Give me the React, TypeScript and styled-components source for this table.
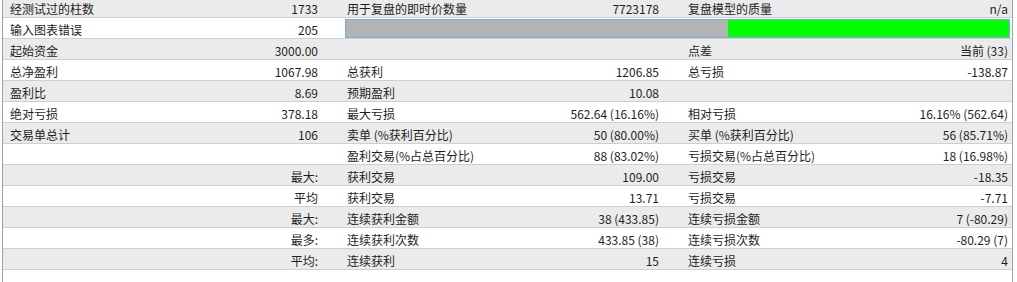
import styled, { createGlobalStyle } from 'styled-components';

const Global = createGlobalStyle`
  html, body { margin: 0; padding: 0; background: #fff; }
  body { font-family: "Noto Sans CJK SC", "Noto Sans", sans-serif; font-size: 12px; color: #1e1e1e; overflow: hidden; }
`;

const Table = styled.div`
  margin: -3px 0 0 2px;
  width: 1009px;
  border-left: 1px solid #a0a0a0;
  border-right: 1px solid #a0a0a0;
  padding-bottom: 12px;
`;

const Row = styled.div<{ $odd: boolean }>`
  display: grid;
  grid-template-columns: 197px 122px 178px 163px 187px 1fr;
  height: 20px;
  border-bottom: 1px solid #cfcfcf;
  background: ${(p) => (p.$odd ? '#ebebeb' : '#ffffff')};
`;

const Cell = styled.div<{ $right?: boolean; $first?: boolean }>`
  display: flex;
  align-items: center;
  padding-top: 2px;
  white-space: nowrap;
  justify-content: ${(p) => (p.$right ? 'flex-end' : 'flex-start')};
  padding-left: ${(p) => (p.$right ? '0' : p.$first ? '7px' : '25px')};
  padding-right: ${(p) => (p.$right ? '4px' : '0')};
`;

const BarCell = styled.div`
  grid-column: 3 / 7;
  display: flex;
  align-items: stretch;
  padding: 1px 2px 0 23px;
`;

const Bar = styled.div`
  flex: 1;
  display: flex;
  border: 1px solid #7aaee0;
  background: #b3b3b3;
`;

const Fill = styled.div`
  margin-left: auto;
  background: #00ff00;
`;

type Cells = [string, string, string, string, string, string];

const rows: Cells[] = [
  ['经测试过的柱数', '1733', '用于复盘的即时价数量', '7723178', '复盘模型的质量', 'n/a'],
  ['输入图表错误', '205', '', '', '', ''],
  ['起始资金', '3000.00', '', '', '点差', '当前 (33)'],
  ['总净盈利', '1067.98', '总获利', '1206.85', '总亏损', '-138.87'],
  ['盈利比', '8.69', '预期盈利', '10.08', '', ''],
  ['绝对亏损', '378.18', '最大亏损', '562.64 (16.16%)', '相对亏损', '16.16% (562.64)'],
  ['交易单总计', '106', '卖单 (%获利百分比)', '50 (80.00%)', '买单 (%获利百分比)', '56 (85.71%)'],
  ['', '', '盈利交易(%占总百分比)', '88 (83.02%)', '亏损交易(%占总百分比)', '18 (16.98%)'],
  ['', '最大:', '获利交易', '109.00', '亏损交易', '-18.35'],
  ['', '平均', '获利交易', '13.71', '亏损交易', '-7.71'],
  ['', '最大:', '连续获利金额', '38 (433.85)', '连续亏损金额', '7 (-80.29)'],
  ['', '最多:', '连续获利次数', '433.85 (38)', '连续亏损次数', '-80.29 (7)'],
  ['', '平均:', '连续获利', '15', '连续亏损', '4'],
];

const quality = 281 / 663;

export default function App() {
  return (
    <>
      <Global />
      <Table>
        {rows.map((r, i) => (
          <Row key={i} $odd={i % 2 === 0}>
            <Cell $first>{r[0]}</Cell>
            <Cell $right>{r[1]}</Cell>
            {i === 1 ? (
              <BarCell>
                <Bar>
                  <Fill style={{ width: `${quality * 100}%` }} />
                </Bar>
              </BarCell>
            ) : (
              <>
                <Cell>{r[2]}</Cell>
                <Cell $right>{r[3]}</Cell>
                <Cell>{r[4]}</Cell>
                <Cell $right>{r[5]}</Cell>
              </>
            )}
          </Row>
        ))}
      </Table>
    </>
  );
}
